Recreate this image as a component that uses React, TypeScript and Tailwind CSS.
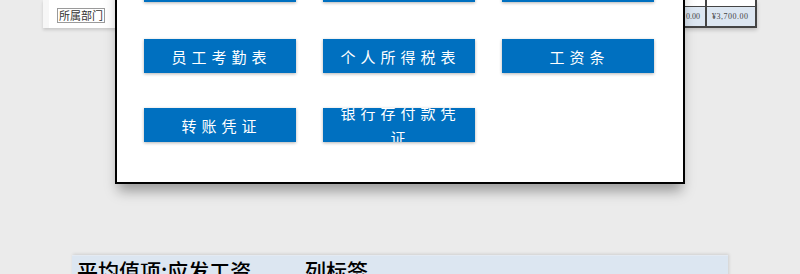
const cjk = { fontFamily: '"Noto Sans CJK SC", "Noto Sans", sans-serif' };

const rows: string[][] = [
  ["员工信息表", "部门工资表", "工资汇总表"],
  ["员工考勤表", "个人所得税表", "工资条"],
  ["转账凭证", "银行存付款凭证"],
];

function NavButton({ label }: { label: string }) {
  return (
    <div
      className="flex h-[34px] w-[152px] items-center justify-center overflow-hidden bg-[#0070c0] px-[8px] text-center text-[15px] leading-[25px] tracking-[5px] text-white shadow-[0_1px_3px_rgba(0,0,0,0.3)]"
      style={cjk}
    >
      <span className="pl-[3px]">{label}</span>
    </div>
  );
}

export default function App() {
  return (
    <div className="relative flex h-[274px] w-[800px] flex-col overflow-hidden bg-[#ebebeb]">
      {/* spreadsheet behind the dialog */}
      <div className="flex h-[28px]">
        <div className="ml-[43px] flex w-[76px] border-l-[6px] border-[#f6f6f6] bg-white shadow-[0_2px_3px_rgba(0,0,0,0.15)]">
          <div
            className="ml-[8px] mt-[8px] h-[15px] w-[48px] border border-[#9a9a9a] px-[1px] text-[11px] leading-[13px] text-[#333]"
            style={cjk}
          >
            所属部门
          </div>
        </div>
        <div className="ml-[565px] flex h-[28px] w-[73px] flex-col border-b-2 border-r-2 border-[#444] shadow-[0_2px_4px_rgba(0,0,0,0.2)]">
          <div className="flex h-[7px] border-b border-[#444] bg-white">
            <div className="w-[23px] border-r-2 border-[#444]" />
            <div className="flex-1" />
          </div>
          <div
            className="flex flex-1 items-center bg-[#dce6f1] text-[8px] text-[#444]"
            style={{ fontFamily: '"Liberation Serif", serif' }}
          >
            <div className="flex h-full w-[23px] items-center justify-end border-r-2 border-[#444] pr-[5px]">
              0.00
            </div>
            <div className="flex-1 pl-[5px] tracking-[0.5px]">¥3,700.00</div>
          </div>
        </div>
      </div>

      <div
        className="ml-[72px] mt-[227px] flex h-[30px] w-[656px] items-start border-t border-[#e4eaf2] bg-[#dce6f1] text-[21px] font-medium leading-[28px] text-black shadow-[1px_-1px_3px_rgba(0,0,0,0.12)]"
        style={cjk}
      >
        <div className="w-[228px] pl-[5px]">平均值项:应发工资</div>
        <div className="pl-[5px]">列标签</div>
      </div>

      {/* navigation dialog */}
      <div className="absolute left-[115px] top-[-40px] h-[224px] w-[570px] border-2 border-black bg-white pl-[27px] pt-[6px] shadow-[0_10px_12px_-3px_rgba(0,0,0,0.35)]">
        <div className="flex flex-col">
          {rows.map((row, i) => (
            <div
              key={i}
              className={
                "grid grid-cols-[152px_152px_152px] gap-x-[27px] " +
                (i === 1 ? "mt-[37px]" : i === 2 ? "mt-[35px]" : "")
              }
            >
              {row.map((label) => (
                <NavButton key={label} label={label} />
              ))}
            </div>
          ))}
        </div>
      </div>
    </div>
  );
}
